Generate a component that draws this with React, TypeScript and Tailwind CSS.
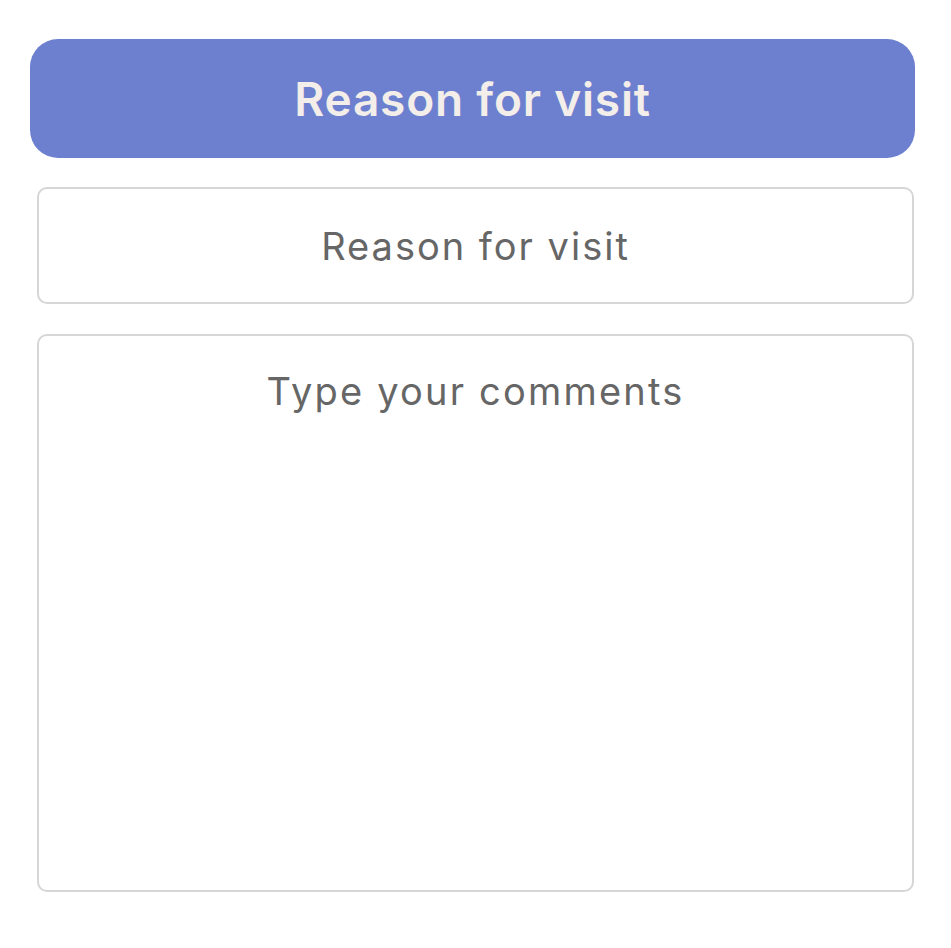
import React from 'react';

const font = { fontFamily: 'Inter, "Liberation Sans", sans-serif' };

export default function App() {
  return (
    <div className="min-h-screen w-full bg-white" style={font}>
      <div className="flex flex-col pt-[39px]">
        {/* Header bar */}
        <div className="ml-[30px] flex h-[119px] w-[885px] items-center justify-center rounded-[28px] bg-[#6d80cf]">
          <span className="text-[46px] font-semibold leading-none tracking-[0.8px] text-[#f3eee9]">Reason for visit</span>
        </div>

        {/* Reason input */}
        <div className="ml-[37px] mt-[29px] flex h-[117px] w-[877px] items-center justify-center rounded-[10px] border-2 border-[#d6d6d6]">
          <span className="text-[38px] leading-none tracking-[2px] text-[#666666]">Reason for visit</span>
        </div>

        {/* Comments */}
        <div className="ml-[37px] mt-[30px] flex h-[558px] w-[877px] justify-center rounded-[10px] border-2 border-[#d6d6d6] pt-[36px]">
          <span className="text-[38px] leading-none tracking-[2.2px] text-[#666666]">Type your comments</span>
        </div>
      </div>
    </div>
  );
}
